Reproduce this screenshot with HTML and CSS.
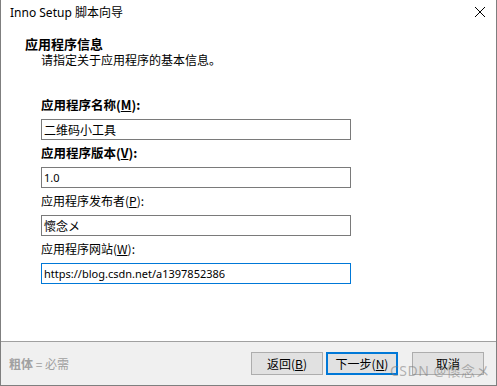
FILE: index.html
```html
<!DOCTYPE html>
<html lang="zh-CN">
<head>
<meta charset="utf-8">
<link rel="stylesheet" href="styles.css">
</head>
<body>
<div class="window">
  <div class="titlebar">
    <span class="title">Inno Setup 脚本向导</span>
    <svg class="close" width="12" height="12" viewBox="0 0 12 12"><path d="M1 1 L11 11 M11 1 L1 11" stroke="#000" stroke-width="1" fill="none"/></svg>
  </div>
  <div class="content">
    <div class="header">
      <div class="h-title">应用程序信息</div>
      <div class="h-sub">请指定关于应用程序的基本信息。</div>
    </div>
    <div class="form">
      <div class="label bold">应用程序名称(<u>M</u>):</div>
      <div class="input cjk">二维码小工具</div>
      <div class="label bold">应用程序版本(<u>V</u>):</div>
      <div class="input">1.0</div>
      <div class="label">应用程序发布者(<u>P</u>):</div>
      <div class="input cjk">懷念メ</div>
      <div class="label">应用程序网站(<u>W</u>):</div>
      <div class="input focus">https://blog.csdn.net/a1397852386</div>
    </div>
  </div>
  <div class="footer">
    <div class="note"><b>粗体</b> = 必需</div>
    <div class="buttons">
      <div class="btn">返回(<u>B</u>)</div>
      <div class="btn default">下一步(<u>N</u>)</div>
      <div class="btn cancel">取消</div>
    </div>
    <div class="watermark">CSDN @懷念メ</div>
  </div>
</div>
</body>
</html>
```
FILE: styles.css
```css
* { box-sizing: border-box; }
html, body { margin: 0; padding: 0; background: #fff; }
body {
  font-family: "Noto Sans", "Noto Sans CJK SC", sans-serif;
  font-size: 12px;
  color: #000;
}
.window {
  width: 497px;
  height: 386px;
  border-left: 1px solid #7f7f7f;
  border-right: 1px solid #7f7f7f;
  border-bottom: 1px solid #7f7f7f;
  display: flex;
  flex-direction: column;
  background: #fff;
  position: relative;
}
.titlebar {
  height: 30px;
  display: flex;
  align-items: center;
  justify-content: space-between;
  padding: 0 9px 6px 9px;
}
.title { font-size: 12px; color: #000; }
.close { margin-right: 1px; }
.content {
  flex: 1;
  padding-left: 24px;
}
.header { padding-top: 6px; }
.h-title {
  font-family: "Noto Sans CJK SC", sans-serif;
  font-weight: bold;
  font-size: 13px;
  line-height: 16px;
}
.h-sub {
  font-family: "Noto Sans CJK SC", sans-serif;
  font-size: 12px;
  line-height: 16px;
  padding-left: 16px;
}
.form {
  padding-left: 16px;
  padding-top: 23px;
  width: 350px;
}
.label {
  font-family: "Noto Sans CJK SC", sans-serif;
  font-size: 12px;
  line-height: 16px;
  height: 16px;
  margin: 5px 0 6px 0;
}
.label.bold { font-weight: bold; font-size: 12.5px; }
.label:first-child { margin-top: 6px; }
.input {
  width: 310px;
  height: 21px;
  border: 1px solid #7a7a7a;
  padding: 0 2px;
  line-height: 19px;
  font-family: "Noto Sans", "Noto Sans CJK SC", sans-serif;
  font-size: 11px;
  white-space: nowrap;
}
.input.cjk { font-family: "Noto Sans CJK SC", sans-serif; font-size: 12px; }
.input.focus { border-color: #0078d7; }
.footer {
  height: 44px;
  background: #f0f0f0;
  border-top: 1px solid #a0a0a0;
  display: flex;
  align-items: center;
  justify-content: space-between;
  padding: 0 12px 0 8px;
  position: relative;
}
.note {
  color: #a0a0a0;
  font-family: "Noto Sans CJK SC", sans-serif;
  font-size: 12px;
}
.buttons { display: flex; gap: 3px; }
.btn {
  width: 72px;
  height: 23px;
  background: #e1e1e1;
  border: 1px solid #adadad;
  display: flex;
  align-items: center;
  justify-content: center;
  font-family: "Noto Sans CJK SC", sans-serif;
  font-size: 12px;
}
.btn.default { border: 2px solid #0078d7; }
.btn.cancel { margin-left: 11px; }
.watermark {
  position: absolute;
  right: 6px;
  top: 18px;
  font-family: "Noto Sans", "Noto Sans CJK SC", sans-serif;
  font-size: 14px;
  letter-spacing: 0.5px;
  color: rgba(120,120,120,0.55);
}
```
